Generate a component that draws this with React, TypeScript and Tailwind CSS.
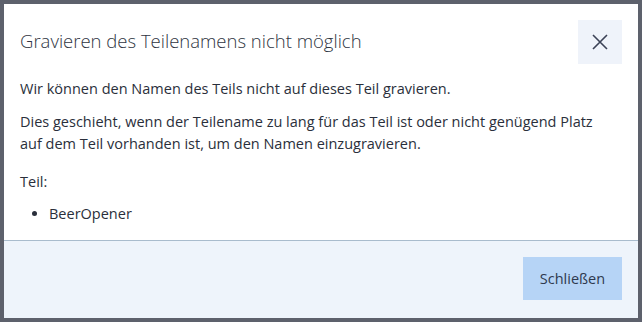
import React from "react";

const CloseIcon = () => (
  <svg width="18" height="18" viewBox="0 0 18 18" fill="none" stroke="#3b4256" strokeWidth="1.6">
    <path d="M2 2 L16 16 M16 2 L2 16" />
  </svg>
);

export default function App() {
  return (
    <div className="w-[642px] h-[322px] bg-[#5d616c] p-[4px] font-['Open_Sans',sans-serif]">
      <div className="flex flex-col h-full bg-white">
        <div className="flex items-start justify-between pl-[16px] pr-[16px] pt-[16px]">
          <h1 className="pt-[8px] text-[18.5px] leading-[26px] font-light text-[#2f3542]">
            Gravieren des Teilenamens nicht möglich
          </h1>
          <button className="w-[44px] h-[44px] flex items-center justify-center bg-[#eff3fa]">
            <CloseIcon />
          </button>
        </div>
        <div className="flex-1 pl-[16px] pr-[32px] pt-[14px] text-[14.5px] leading-[22px] text-[#2a2f3b]">
          <p>Wir können den Namen des Teils nicht auf dieses Teil gravieren.</p>
          <p className="mt-[11px]">
            Dies geschieht, wenn der Teilename zu lang für das Teil ist oder nicht genügend Platz
            auf dem Teil vorhanden ist, um den Namen einzugravieren.
          </p>
          <p className="mt-[16px]">Teil:</p>
          <ul className="mt-[10px] list-disc pl-[29px]">
            <li>BeerOpener</li>
          </ul>
        </div>
        <div className="h-[78px] border-t border-[#a9bccd] bg-[#eef4fb] flex items-start justify-end pr-[16px] pt-[16px]">
          <button className="w-[99px] h-[43px] bg-[#b6d4f6] text-[14.5px] text-[#2f3a4f]">Schließen</button>
        </div>
      </div>
    </div>
  );
}
